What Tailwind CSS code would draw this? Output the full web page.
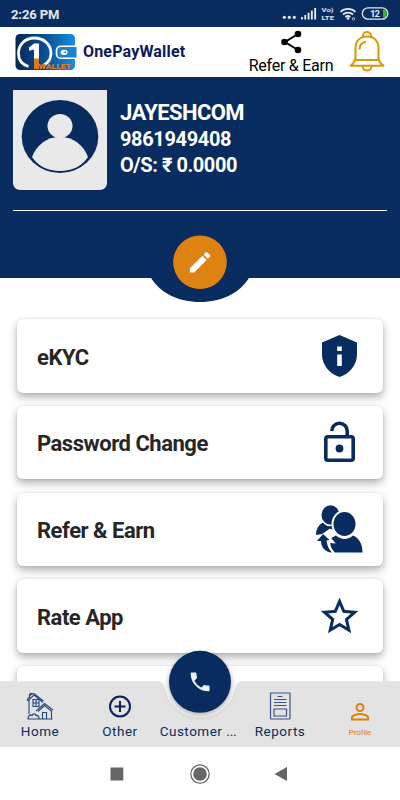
<!DOCTYPE html>
<html lang="en">
<head>
  <meta charset="UTF-8" />
  <meta name="viewport" content="width=device-width, initial-scale=1.0"/>
  <title>OnePayWallet</title>
  <script src="https://cdn.jsdelivr.net/npm/@tailwindcss/browser@4"></script>
</head>
<body class="bg-white font-['Roboto',sans-serif]">
  <div class="relative flex flex-col w-[400px] h-[800px] overflow-hidden">

    <!-- Status bar -->
    <div class="flex items-center justify-between h-[27px] shrink-0 bg-[#082c60] pl-[11px] pr-[11px] text-[#e4e8ee]">
      <span class="text-[13px] leading-none font-bold tracking-[-0.1px] pt-0.5">2:26 PM</span>
      <svg class="w-[107px] h-[27px]" viewBox="0 0 107 27" fill="currentColor">
        <circle cx="2.3" cy="17.3" r="1.6"/><circle cx="7.3" cy="17.3" r="1.6"/><circle cx="12.3" cy="17.3" r="1.6"/>
        <path d="M19 17h1.900v2.500H19zM22.300 15h1.900v4.500h-1.900zM25.600 12.700h1.900v6.800h-1.900zM28.900 10.400h1.900v9.100h-1.900zM32.200 8h1.900v11.500h-1.900z"/>
        <text x="39.500" y="12.400" font-size="6" font-weight="700" textLength="12" lengthAdjust="spacingAndGlyphs">Vo)</text>
        <text x="39.500" y="19.800" font-size="6" font-weight="700" textLength="12.500" lengthAdjust="spacingAndGlyphs">LTE</text>
        <g fill="none" stroke="currentColor" stroke-width="1.7">
          <path d="M58.500 11.800a11 11 0 0 1 15 0M61 14.500a7.500 7.500 0 0 1 10 0M63.300 17a4 4 0 0 1 5 0"/>
          <rect x="80.300" y="7.800" width="25.500" height="11.400" rx="5.700" stroke-width="1.300"/>
        </g>
        <circle cx="66" cy="18.500" r="1.300"/>
        <circle cx="71.500" cy="18.800" r="1.200" fill="none" stroke="currentColor" stroke-width=".8"/>
        <path d="M101 9.500h1.200a2.500 4 0 0 1 0 8H101z" fill="#3fb51f"/>
        <text x="88" y="17" font-size="9.500" font-weight="700" textLength="10">12</text>
      </svg>
    </div>

    <!-- App header -->
    <header class="flex items-center h-[50px] shrink-0 bg-white pl-[14px]">
      <svg class="w-[63px] h-[40px] shrink-0" viewBox="0 0 63 40">
        <defs>
          <linearGradient id="logo" x1="0" x2="1">
            <stop offset="0" stop-color="#072658"/><stop offset=".5" stop-color="#0b4f94"/><stop offset="1" stop-color="#1a8ee0"/>
          </linearGradient>
        </defs>
        <rect x="1.500" y="2" width="59.500" height="36" rx="4.500" fill="url(#logo)"/>
        <path d="M62.500 15H46a3.500 3.500 0 0 0-3.500 3.500v3.500a3.500 3.500 0 0 0 3.500 3.500h16.500z" fill="#1a82d0"/>
        <path d="M61 14.300H46.500a4 4 0 0 0-4 4v3.900a4 4 0 0 0 4 4H61" fill="none" stroke="#fff" stroke-width="1.600"/>
        <rect x="46.700" y="17.700" width="6.800" height="5.200" rx="2.600" fill="#fff"/>
        <circle cx="51.300" cy="20.300" r="1" fill="#1a82d0"/>
        <path d="M14.500 34.500C8 32.500 4.500 27.500 4.500 21.500 4.500 12 11.500 6 20.500 6S37 12 37 21.500c0 5.500-2.500 9-7 11.500" fill="none" stroke="#fff" stroke-width="2.800"/>
        <path d="M20 11.500h5V28h-5V17.500l-5 1.300v-3.300z" fill="#fff"/>
        <path d="M20 26.500h5V37h-5z" fill="#d87d1e"/>
        <text x="24.500" y="37.200" font-size="6.800" font-weight="900" fill="#d97b28" textLength="32.500" lengthAdjust="spacingAndGlyphs">WALLET</text>
      </svg>
      <h1 class="ml-[6px] w-[104px] text-[16px] font-bold tracking-[0.180px] text-[#0b1a58]">OnePayWallet</h1>
      <div class="ml-[61px] flex flex-col items-center w-[86px]">
        <svg class="w-[22px] h-[24px] mt-[3px]" viewBox="0 0 22 24">
          <path d="M18 4 5 12l13 8" fill="none" stroke="#000" stroke-width="2"/>
          <circle cx="18" cy="4" r="3.300"/><circle cx="4.500" cy="12" r="3.300"/><circle cx="18" cy="20" r="3.300"/>
        </svg>
        <span class="text-[16px] leading-[24px] tracking-[-0.250px] whitespace-nowrap text-black">Refer &amp; Earn</span>
      </div>
      <svg class="ml-[15px] w-[36px] h-[42px]" viewBox="0 0 36 42" fill="none" stroke="#d69a0c" stroke-width="2.100" stroke-linejoin="round">
        <path d="M14 6.200V5a4 4 0 0 1 8 0v1.200"/>
        <path d="M1.500 34.700c4-2.500 5-5 5-9V17c0-7 4.500-11.500 11.500-11.500S29.500 10 29.500 17v8.700c0 4 1 6.500 5 9z"/>
        <path d="M6 29h24M10.500 18.500c0-4.500 2.500-7 6.500-7.800"/>
        <path d="M13.500 35a4.500 4.500 0 0 0 9 0"/>
      </svg>
    </header>

    <!-- Profile -->
    <section class="relative h-[200.500px] shrink-0 bg-[#082c60] px-[13px] pt-[13px]">
      <div class="flex">
        <div class="w-[94px] h-[100px] bg-[#e9e9e9] rounded-b-[7px]">
          <svg class="w-[94px] h-[100px]" viewBox="0 0 94 100">
            <ellipse cx="47" cy="46.500" rx="38.300" ry="36.500" fill="#082c60"/>
            <path d="M19 67c5-12.500 15-20 28-20s23 7.500 28 20c-6 9-16 14-28 14s-22-5-28-14z" fill="#e9e9e9"/>
            <ellipse cx="47" cy="36" rx="12.500" ry="12" fill="#e9e9e9"/>
          </svg>
        </div>
        <div class="ml-[13px] pt-[9px] text-white font-bold whitespace-nowrap">
          <p class="text-[22px] leading-[27px] tracking-[-0.600px]">JAYESHCOM</p>
          <p class="text-[20px] leading-[26px] tracking-[-0.350px]">9861949408</p>
          <p class="text-[20px] leading-[26px] tracking-[-0.450px]">O/S: ₹ 0.0000</p>
        </div>
      </div>
      <div class="mt-[20px] h-px bg-white"></div>
      <svg class="absolute left-[140px] top-[150px] w-[120px] h-[76px]" viewBox="0 0 120 76">
        <path d="M10.500 50C20 66 38 75 60 75s40-9 49.500-25z" fill="#082c60"/>
        <circle cx="60" cy="35.200" r="26.800" fill="#de8212"/>
        <path transform="translate(46.500 21.700) scale(1.130)" d="M3 17.250V21h3.750L17.810 9.940l-3.750-3.750L3 17.250zM20.710 7.040a1 1 0 0 0 0-1.410l-2.340-2.340a1 1 0 0 0-1.410 0l-1.830 1.830 3.750 3.750 1.830-1.830z" fill="#fff"/>
      </svg>
    </section>

    <!-- Menu -->
    <main class="flex flex-col gap-[13.400px] px-[17px] pt-[41.800px] text-[22px] font-bold tracking-[-0.480px] text-[#262626]">
      <div class="flex items-center justify-between h-[73.300px] shrink-0 rounded-md bg-white pl-5 pr-[19px] shadow-[0_4px_8px_rgba(0,0,0,0.32),0_0_2px_rgba(0,0,0,0.12)]">
        <span class="pt-[3px]">eKYC</span>
        <svg class="w-[50px] h-[50px]" viewBox="0 0 50 50">
          <path d="M25.500 4 43 11.500v12c0 10-7.500 19.500-17.500 22.500C15.500 43 8 33.500 8 23.500v-12z" fill="#082c60"/>
          <path d="M23.200 15.500h4.600V20h-4.600zM23.200 23.500h4.600V35h-4.600z" fill="#fff"/>
        </svg>
      </div>
      <div class="flex items-center justify-between h-[73.300px] shrink-0 rounded-md bg-white pl-5 pr-[19px] shadow-[0_4px_8px_rgba(0,0,0,0.32),0_0_2px_rgba(0,0,0,0.12)]">
        <span class="pt-[2px]">Password Change</span>
        <svg class="w-[50px] h-[50px]" viewBox="0 0 50 50" fill="none" stroke="#082c60" stroke-width="3.600">
          <rect x="11.800" y="18.800" width="27.400" height="23.400" rx="2"/>
          <path d="M17.800 13a7.500 7.500 0 0 1 15.400 0v5.500"/>
          <circle cx="25.500" cy="30.500" r="3.900" fill="#082c60" stroke="none"/>
        </svg>
      </div>
      <div class="flex items-center justify-between h-[73.300px] shrink-0 rounded-md bg-white pl-5 pr-[19px] shadow-[0_4px_8px_rgba(0,0,0,0.32),0_0_2px_rgba(0,0,0,0.12)]">
        <span class="pt-[3px]">Refer &amp; Earn</span>
        <svg class="w-[50px] h-[50px]" viewBox="0 0 50 50" fill="#082c60">
          <ellipse cx="16.500" cy="11" rx="9" ry="9.700"/>
          <path d="M2 31c0-5.500 2.500-10.500 7-12.500 3 4.500 9 5 12.500 1L21 24l-3.500 1.500-1.500-1-5 3.500-3 2z"/>
          <ellipse cx="30.500" cy="20" rx="12" ry="13" stroke="#fff" stroke-width="2"/>
          <path d="M22 31.500c5 4.500 12 4.500 17 0 6 2.500 9.500 8.500 9.500 17H21c-3-2.500-4.500-5.500-4.800-9.500l5.500.5-4.500-5.500z"/>
          <path d="m9 30 6.500 6-3 .5c.5 4.500 2 8.500 5.500 12C11 48 7 43.500 7 37H3z"/>
        </svg>
      </div>
      <div class="flex items-center justify-between h-[73.300px] shrink-0 rounded-md bg-white pl-5 pr-[19px] shadow-[0_4px_8px_rgba(0,0,0,0.32),0_0_2px_rgba(0,0,0,0.12)]">
        <span class="pt-[3px]">Rate App</span>
        <svg class="w-[50px] h-[50px]" viewBox="0 0 50 50">
          <path transform="translate(3 2.700) scale(1.880)" d="M22 9.240l-7.190-.62L12 2 9.190 8.630 2 9.240l5.460 4.730L5.820 21 12 17.270 18.180 21l-1.630-7.030L22 9.240zM12 15.400l-3.760 2.270 1-4.280-3.320-2.880 4.380-.38L12 6.100l1.710 4.040 4.380.38-3.320 2.880 1 4.280L12 15.400z" fill="#082c60"/>
        </svg>
      </div>
      <div class="h-[73.300px] shrink-0 rounded-md bg-white shadow-[0_4px_8px_rgba(0,0,0,0.32),0_0_2px_rgba(0,0,0,0.12)]"></div>
    </main>

    <!-- Bottom bar lies over the scrolling menu -->
    <footer class="absolute inset-x-0 bottom-0">
      <div class="relative h-[100px]">
        <svg class="absolute inset-0 w-[400px] h-[100px]" viewBox="0 0 400 100">
          <defs>
            <filter id="shade" x="-30%" y="-30%" width="160%" height="160%"><feGaussianBlur stdDeviation="2.500"/></filter>
          </defs>
          <path d="M0 34.300H157C162 34.300 164 37 165 41a35.500 35.500 0 0 0 70 0c1-4 3-6.700 8-6.700H400V100H0z" fill="#e3e3e3"/>
          <circle cx="200" cy="37.500" r="32" fill="#000" opacity=".25" filter="url(#shade)"/>
          <circle cx="200" cy="34.800" r="31" fill="#082c60"/>
          <path transform="translate(187.500 22.300) scale(1.050)" d="M6.620 10.790c1.440 2.830 3.760 5.140 6.590 6.590l2.200-2.200c.27-.27.670-.36 1.020-.24 1.120.37 2.330.57 3.570.57.550 0 1 .45 1 1V20c0 .55-.45 1-1 1C10.610 21 3 13.390 3 4c0-.55.45-1 1-1h3.500c.55 0 1 .45 1 1 0 1.250.2 2.450.57 3.570.11.350.03.740-.25 1.020l-2.200 2.200z" fill="#eef0f4"/>
        </svg>
        <nav class="relative grid grid-cols-5 h-full pt-[45px] text-[13.500px] leading-4 tracking-[0.500px] text-[#082c60]">
          <div class="flex flex-col items-center">
            <svg class="w-[28px] h-[28px]" viewBox="0 0 28 28" fill="none" stroke="#24477c" stroke-width="1.100">
              <path d="M1.500 27h25M3 22V8M1 8l4-5.500 3-1L17.500 9M1.500 9 8 3l9 7.500M3.500 2v4M3.500 1.500h3"/>
              <path d="M7 7.500h6v7H7zM10 7.500v7M7 11h6"/>
              <path d="m10 19 8.500-7.500L27 18M12 19.500l6.500-6L26 19.500M25.500 19v8M16.500 27v-6.500h4V27"/>
              <path d="M2 27c0-3 2-5 4-3.500 1-2.500 4-2 4 0 2-.5 3 1 3 3.500" stroke-width="1.300"/>
            </svg>
            <span class="mt-[3px]">Home</span>
          </div>
          <div class="flex flex-col items-center">
            <svg class="w-[28px] h-[28px]" viewBox="0 0 28 28" fill="none" stroke="#0a1f5c" stroke-width="2">
              <circle cx="14" cy="14.500" r="10"/><path d="M14 9v11M8.500 14.500h11"/>
            </svg>
            <span class="mt-[3px]">Other</span>
          </div>
          <div class="flex flex-col items-center">
            <span class="mt-[31px] mr-1 whitespace-nowrap">Customer <span class="tracking-[-0.200px]">...</span></span>
          </div>
          <div class="flex flex-col items-center">
            <svg class="w-[28px] h-[28px]" viewBox="0 0 28 28" fill="none" stroke="#3c5585" stroke-width="1.200">
              <rect x="4.500" y="1" width="19.500" height="26" rx=".5"/>
              <path d="M11.500 4.500h5M8 7.500h12.500M8 10.500h12.500M8 13.500h12.500"/>
              <path d="M8 17h12.500v7H8z"/>
            </svg>
            <span class="mt-[3px]">Reports</span>
          </div>
          <div class="flex flex-col items-center text-[#e07f0c]">
            <svg class="mt-[10px] w-[20px] h-[20px]" viewBox="0 0 20 20" fill="none" stroke="currentColor" stroke-width="2">
              <circle cx="10" cy="5.500" r="3.500"/>
              <path d="M2 17.500v-2c0-2.300 5-3.400 8-3.400s8 1.100 8 3.400v2z"/>
            </svg>
            <span class="text-[8px] tracking-[-0.100px] mt-[3px]">Profile</span>
          </div>
        </nav>
      </div>

      <!-- Android keys -->
      <div class="flex items-center justify-center h-[53px] bg-white text-[#666]">
        <svg class="w-[180px] h-[22px]" viewBox="0 0 180 22" fill="currentColor">
          <path d="M.5 4.500h12.800v13H.5z"/>
          <circle cx="90" cy="11" r="9.200" fill="none" stroke="currentColor" stroke-width="1.200"/>
          <circle cx="90" cy="11" r="6.800"/>
          <path d="M164.500 11 177 4v14z"/>
        </svg>
      </div>
    </footer>
  </div>
</body>
</html>
